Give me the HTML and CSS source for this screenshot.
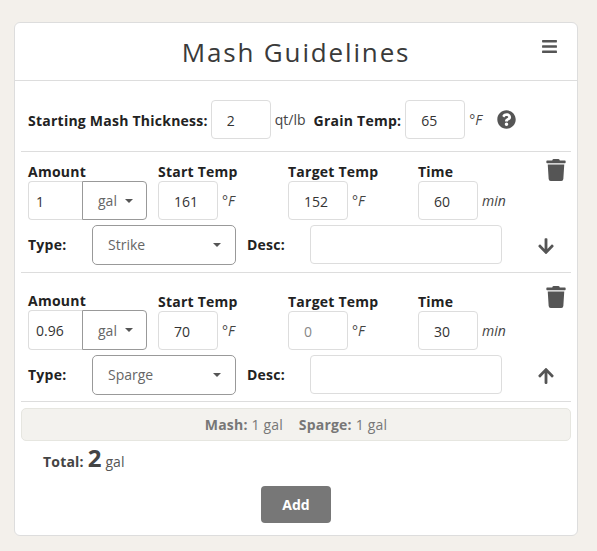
FILE: index.html
```html
<!DOCTYPE html>
<html lang="en">
<head>
<meta charset="utf-8">
<title>Mash Guidelines</title>
<link rel="stylesheet" href="styles.css">
</head>
<body>
<main class="card">
  <header class="card-head">
    <h1 class="title">Mash Guidelines</h1>
    <button class="icon-btn menu-btn" aria-label="Menu">
      <svg class="icon-bars" viewBox="0 0 448 512"><path d="M16 132h416c8.837 0 16-7.163 16-16V76c0-8.837-7.163-16-16-16H16C7.163 60 0 67.163 0 76v40c0 8.837 7.163 16 16 16zm0 160h416c8.837 0 16-7.163 16-16v-40c0-8.837-7.163-16-16-16H16c-8.837 0-16 7.163-16 16v40c0 8.837 7.163 16 16 16zm0 160h416c8.837 0 16-7.163 16-16v-40c0-8.837-7.163-16-16-16H16c-8.837 0-16 7.163-16 16v40c0 8.837 7.163 16 16 16z"/></svg>
    </button>
  </header>
  <div class="card-body">
    <section class="settings">
      <label class="label label-thickness">Starting Mash Thickness:</label>
      <input class="input input-sm" value="2">
      <span class="unit unit-qt">qt/lb</span>
      <label class="label label-grain">Grain Temp:</label>
      <input class="input input-sm" value="65">
      <em class="unit">°F</em>
      <svg class="icon-help" viewBox="0 0 512 512"><path d="M504 256c0 136.997-111.043 248-248 248S8 392.997 8 256C8 119.083 119.043 8 256 8s248 111.083 248 248zM262.655 90c-54.497 0-89.255 22.957-116.549 63.758-3.536 5.286-2.353 12.415 2.715 16.258l34.699 26.31c5.205 3.947 12.621 3.008 16.665-2.122 17.864-22.658 30.113-35.797 57.303-35.797 20.429 0 45.698 13.148 45.698 32.958 0 14.976-12.363 22.667-32.534 33.976C247.128 238.528 216 254.941 216 296v4c0 6.627 5.373 12 12 12h56c6.627 0 12-5.373 12-12v-1.333c0-28.462 83.186-29.647 83.186-106.667 0-58.002-60.165-102-116.531-102zM256 338c-25.365 0-46 20.635-46 46 0 25.364 20.635 46 46 46s46-20.636 46-46c0-25.365-20.635-46-46-46z"/></svg>
    </section>

    <section class="step">
      <div class="step-fields">
        <div class="field">
          <div class="field-label">Amount</div>
          <div class="amount">
            <input class="input input-amount" value="1">
            <div class="select select-unit">gal<i class="caret"></i></div>
          </div>
        </div>
        <div class="field">
          <div class="field-label">Start Temp</div>
          <div class="with-unit"><input class="input input-sm" value="161"><em class="unit">°F</em></div>
        </div>
        <div class="field">
          <div class="field-label">Target Temp</div>
          <div class="with-unit"><input class="input input-sm" value="152"><em class="unit">°F</em></div>
        </div>
        <div class="field field-time">
          <div class="field-label">Time</div>
          <div class="with-unit"><input class="input input-sm" value="60"><em class="unit">min</em></div>
        </div>
        <svg class="icon-trash" viewBox="0 0 448 512"><path d="M432 32H312l-9.4-18.7A24 24 0 0 0 281.1 0H166.8a23.72 23.72 0 0 0-21.4 13.3L136 32H16A16 16 0 0 0 0 48v32a16 16 0 0 0 16 16h416a16 16 0 0 0 16-16V48a16 16 0 0 0-16-16zM53.2 467a48 48 0 0 0 47.9 45h245.8a48 48 0 0 0 47.9-45L416 128H32z"/></svg>
      </div>
      <div class="step-type">
        <label class="label label-type">Type:</label>
        <div class="select select-type">Strike<i class="caret"></i></div>
        <label class="label label-desc">Desc:</label>
        <input class="input input-desc">
        <svg class="icon-arrow" viewBox="0 0 448 512"><path d="M413.1 222.5l22.2 22.2c9.4 9.4 9.4 24.6 0 33.9L241 473c-9.4 9.4-24.6 9.4-33.9 0L12.7 278.6c-9.4-9.4-9.4-24.6 0-33.9l22.2-22.2c9.5-9.5 25-9.3 34.3.4L184 343.4V56c0-13.3 10.7-24 24-24h32c13.3 0 24 10.7 24 24v287.4l114.8-120.5c9.3-9.8 24.8-10 34.3-.4z"/></svg>
      </div>
    </section>

    <section class="step step-second">
      <div class="step-fields">
        <div class="field field-raised">
          <div class="field-label">Amount</div>
          <div class="amount amount-tall">
            <input class="input input-amount" value="0.96">
            <div class="select select-unit">gal<i class="caret"></i></div>
          </div>
        </div>
        <div class="field">
          <div class="field-label">Start Temp</div>
          <div class="with-unit"><input class="input input-sm" value="70"><em class="unit">°F</em></div>
        </div>
        <div class="field">
          <div class="field-label">Target Temp</div>
          <div class="with-unit"><input class="input input-sm input-muted" value="0"><em class="unit">°F</em></div>
        </div>
        <div class="field field-time">
          <div class="field-label">Time</div>
          <div class="with-unit"><input class="input input-sm" value="30"><em class="unit">min</em></div>
        </div>
        <svg class="icon-trash" viewBox="0 0 448 512"><path d="M432 32H312l-9.4-18.7A24 24 0 0 0 281.1 0H166.8a23.72 23.72 0 0 0-21.4 13.3L136 32H16A16 16 0 0 0 0 48v32a16 16 0 0 0 16 16h416a16 16 0 0 0 16-16V48a16 16 0 0 0-16-16zM53.2 467a48 48 0 0 0 47.9 45h245.8a48 48 0 0 0 47.9-45L416 128H32z"/></svg>
      </div>
      <div class="step-type">
        <label class="label label-type">Type:</label>
        <div class="select select-type">Sparge<i class="caret"></i></div>
        <label class="label label-desc">Desc:</label>
        <input class="input input-desc">
        <svg class="icon-arrow" viewBox="0 0 448 512"><path d="M34.9 289.5l-22.2-22.2c-9.4-9.4-9.4-24.6 0-33.9L207 39c9.4-9.4 24.6-9.4 33.9 0l194.3 194.3c9.4 9.4 9.4 24.6 0 33.9L413 289.4c-9.5 9.5-25 9.3-34.3-.4L264 168.6V456c0 13.3-10.7 24-24 24h-32c-13.3 0-24-10.7-24-24V168.6L69.2 289.1c-9.3 9.8-24.8 10-34.3.4z"/></svg>
      </div>
    </section>

    <div class="summary"><b>Mash:</b> 1 gal <b class="sparge">Sparge:</b> 1 gal</div>
    <div class="total"><b>Total:</b> <strong class="total-num">2</strong> gal</div>
    <div class="actions"><button class="btn-add">Add</button></div>
  </div>
</main>
</body>
</html>
```
FILE: styles.css
```css
* { box-sizing: border-box; }
html, body { margin: 0; }
body {
  background: #f3f0eb;
  padding: 22px 19px 15px 14px;
  font-family: "Open Sans", sans-serif;
  font-size: 14px;
  color: #333;
}
.card {
  width: 564px;
  height: 514px;
  background: #fff;
  border: 1px solid #ddd;
  border-radius: 6px;
}
.card-head {
  height: 58px;
  border-bottom: 1px solid #ddd;
  display: flex;
  justify-content: center;
  align-items: center;
  position: relative;
}
.title {
  margin: 0;
  font-size: 26px;
  font-weight: 500;
  letter-spacing: 1.85px;
  color: #3a3a3a;
}
.icon-btn { border: 0; background: none; padding: 0; }
.menu-btn { position: absolute; top: 15px; right: 20px; height: 16px; }
.icon-bars { display: block; width: 15px; height: 17px; fill: #555; }
.card-body { padding: 0 6px; }
.settings {
  height: 71px;
  padding: 19px 0 0 7px;
  display: flex;
  align-items: flex-start;
  border-bottom: 1px solid #ddd;
}
.label {
  font-weight: 700;
  color: #222;
  letter-spacing: .24px;
  line-height: 39px;
  white-space: nowrap;
}
.settings .label { margin-top: 1px; }
.label-thickness { margin-right: 3px; }
.label-grain { margin-right: 4px; }
.input {
  height: 39px;
  border: 1px solid #ddd;
  border-radius: 4px;
  background: #fff;
  font: 400 14px "Open Sans", sans-serif;
  color: #333;
  padding: 1px 6px 0 15px;
  outline: none;
}
.input-sm { width: 60px; flex: none; }
.input-muted { color: #888; }
.unit { margin-left: 4px; line-height: 40px; color: #444; }
.unit-qt { margin-right: 8px; }
.icon-help { width: 19px; height: 19px; fill: #555; margin: 10px 0 0 15px; flex: none; }
.step { height: 121px; border-bottom: 1px solid #ddd; padding: 8px 0 0 7px; }
.step-second { height: 129px; padding-top: 17px; }
.step-fields { display: flex; position: relative; }
.field { width: 130px; flex: none; padding-top: 3px; }
.field-label {
  font-weight: 700;
  color: #222;
  letter-spacing: .24px;
  line-height: 18px;
  height: 18px;
}
.field-raised .field-label { margin-top: -1px; }
.with-unit, .amount { display: flex; }
.amount { width: 119px; }
.input-amount {
  width: 54px;
  border-radius: 4px 0 0 4px;
  border-right: 0;
  padding: 1px 7px 0;
  flex: none;
}
.amount-tall .input-amount, .amount-tall .select-unit { height: 40px; }
.select {
  background: #fff;
  border: 1px solid #999;
  display: flex;
  align-items: center;
  color: #666;
  position: relative;
}
.select-unit {
  width: 65px;
  height: 39px;
  border-radius: 0 4px 4px 0;
  padding-left: 15px;
  flex: none;
}
.caret {
  width: 0;
  height: 0;
  border: 4px solid transparent;
  border-top-color: #555;
  border-bottom: 0;
  margin-left: 8px;
}
.step-fields .icon-trash {
  width: 20px;
  height: 22px;
  fill: #555;
  margin: -1px 0 0 -2px;
  flex: none;
}
.step-second .step-fields .icon-trash { margin-top: -4px; }
.step-type { display: flex; align-items: center; height: 40px; margin-top: 4px; }
.label-type { width: 64px; margin-top: -2px; }
.select-type {
  width: 144px;
  height: 40px;
  border-radius: 5px;
  padding: 0 14px 2px 15px;
  justify-content: space-between;
  flex: none;
}
.select-type .caret { margin-top: 2px; }
.label-desc { margin-left: 11px; width: 63px; margin-top: -2px; }
.input-desc { width: 192px; height: 39px; flex: none; align-self: flex-start; }
.icon-arrow { width: 16px; height: 18px; fill: #555; margin: 2px 0 0 36px; flex: none; }
.summary {
  margin-top: 6px;
  height: 33px;
  background: #f3f2ee;
  border: 1px solid #e6e6e0;
  border-radius: 5px;
  text-align: center;
  line-height: 31px;
  letter-spacing: .2px;
  color: #777;
  white-space: pre-wrap;
}
.summary b { font-weight: 700; }
.sparge { margin-left: 12px; }
.total { padding: 0 0 0 22px; height: 45px; display: flex; align-items: baseline; gap: 4px; color: #555; line-height: 34px; }
.total b { color: #444; letter-spacing: .2px; }
.total-num { font-size: 24px; font-weight: 700; color: #444; }
.actions { display: flex; justify-content: center; }
.btn-add {
  width: 70px;
  height: 37px;
  background: #777;
  border: 0;
  border-radius: 4px;
  color: #fff;
  font: 700 14px "Open Sans", sans-serif;
}
```
